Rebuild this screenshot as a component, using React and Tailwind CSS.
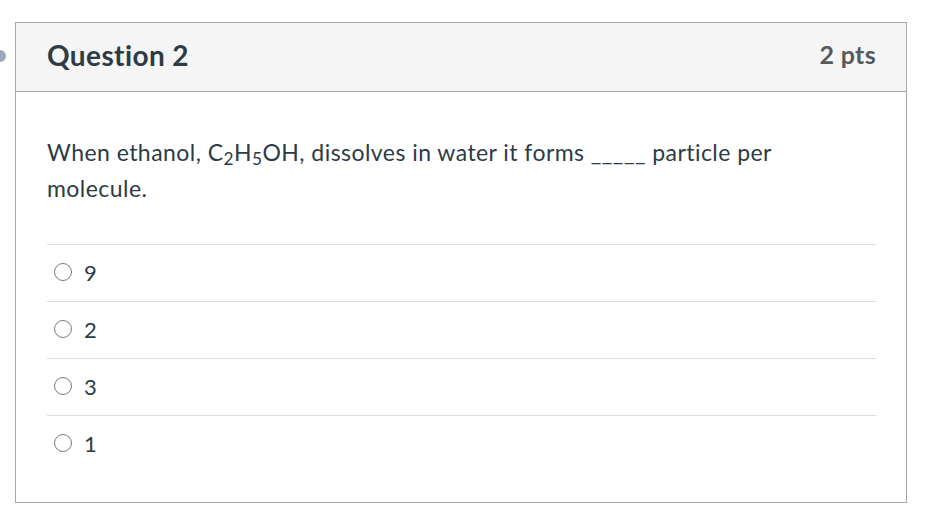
import React from 'react';

const answers = ['9', '2', '3', '1'];

const Radio = () => (
    <span className="w-[18px] h-[18px] rounded-full border-[1.5px] border-[#7a7a7a] bg-white shrink-0" />
);

const App = () => {
    return (
        <div className="relative w-[937px] h-[529px] bg-white pt-[22px] pl-[15px] font-['Lato',sans-serif] text-[#2d3b45]">
            {/* cut-off marker at the page edge */}
            <div className="absolute left-[-6px] top-[50px] w-[12px] h-[12px] rounded-full bg-[#9aaabb]" />

            <div className="w-[892px] h-[481px] border border-[#a8a8a8] flex flex-col">
                {/* Header */}
                <div className="h-[69px] bg-[#f5f5f5] border-b border-[#a8a8a8] flex items-center justify-between pl-[31px] pr-[30px] pb-[4px]">
                    <h2 className="text-[28px] font-bold tracking-[0.4px]">Question 2</h2>
                    <span className="text-[25px] font-bold text-[#555a5e] tracking-[0.3px]">2 pts</span>
                </div>

                {/* Body */}
                <div className="px-[31px] pt-[42px]">
                    <p className="text-[23px] leading-[36px] tracking-[0.45px] w-[770px]">
                        When ethanol, C<sub>2</sub>H<sub>5</sub>OH, dissolves in water it forms _____ particle per molecule.
                    </p>

                    <div className="mt-[38px] w-[829px]">
                        {answers.map((a) => (
                            <div key={a} className="h-[57px] border-t border-[#dcdcdc] flex items-center gap-[12px] pl-[7px] pb-[2px]">
                                <Radio />
                                <span className="text-[22px]">{a}</span>
                            </div>
                        ))}
                    </div>
                </div>
            </div>
        </div>
    );
};

export default App;
